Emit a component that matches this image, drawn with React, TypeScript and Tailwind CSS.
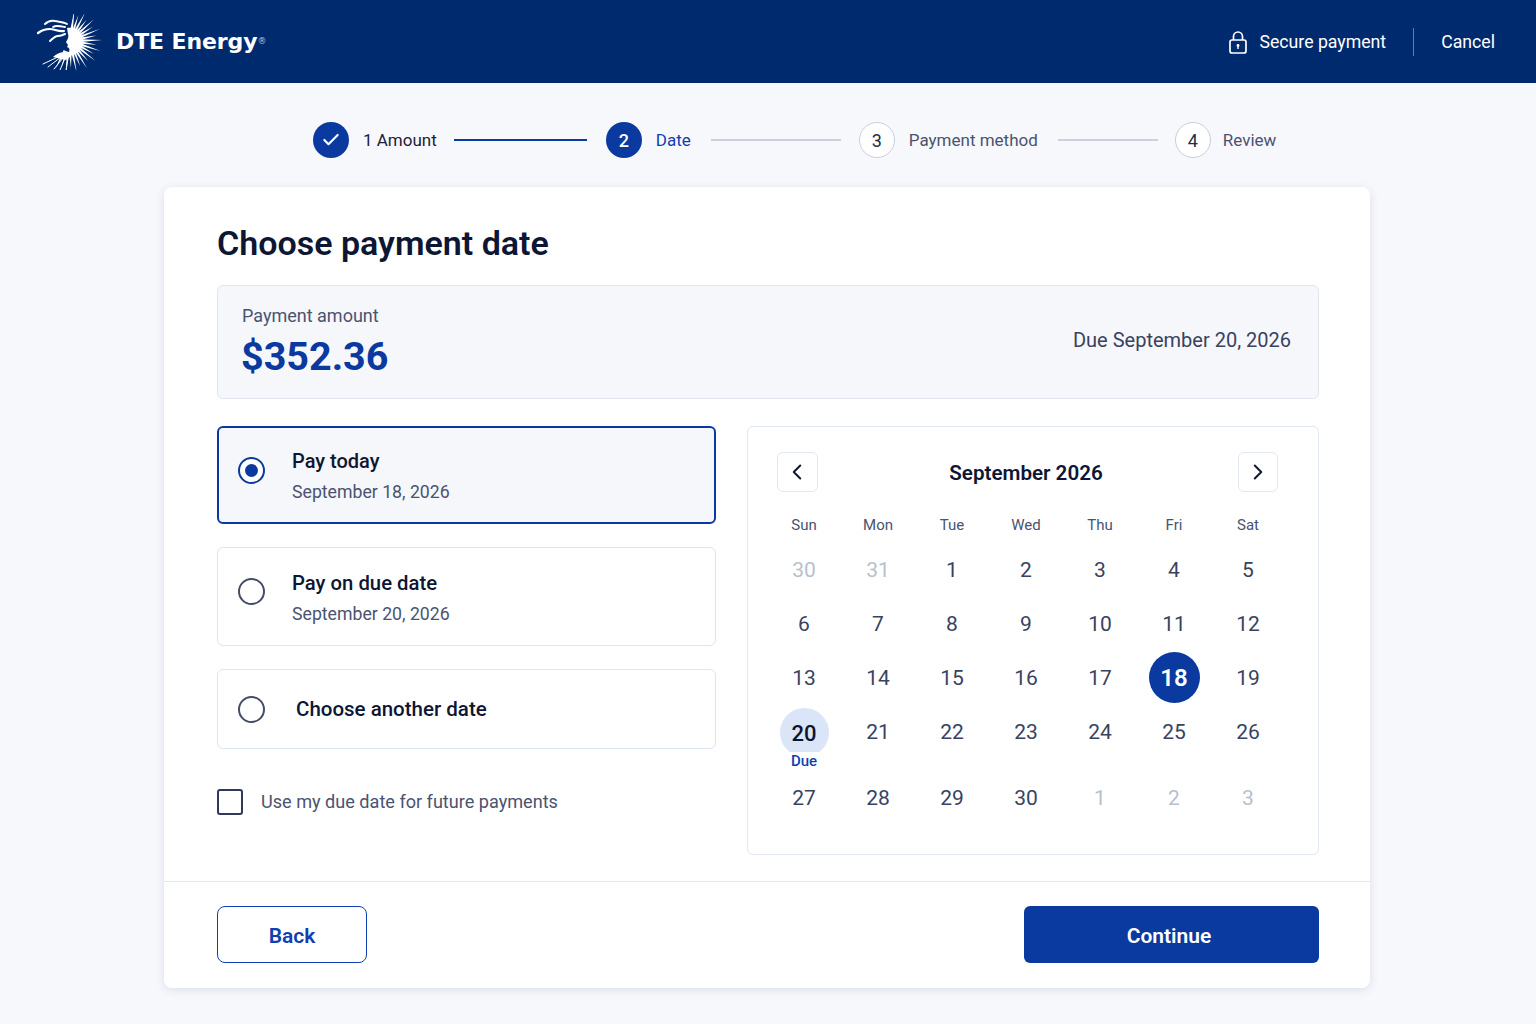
import { Check, ChevronLeft, ChevronRight } from 'lucide-react';

const font = "font-['Roboto','Liberation_Sans',sans-serif]";

const weekdays = ['Sun', 'Mon', 'Tue', 'Wed', 'Thu', 'Fri', 'Sat'];

const weeks = [
  { h: 'h-[54px]', days: [['30', 'off'], ['31', 'off'], ['1'], ['2'], ['3'], ['4'], ['5']] },
  { h: 'h-[54px]', days: [['6'], ['7'], ['8'], ['9'], ['10'], ['11'], ['12']] },
  { h: 'h-[54px]', days: [['13'], ['14'], ['15'], ['16'], ['17'], ['18', 'selected'], ['19']] },
  { h: 'h-[54px]', days: [['20', 'due'], ['21'], ['22'], ['23'], ['24'], ['25'], ['26']] },
  { h: 'h-[78px]', days: [['27'], ['28'], ['29'], ['30'], ['1', 'off'], ['2', 'off'], ['3', 'off']] },
];

function Logo() {
  const cx = 34;
  const cy = 27;
  const rays = [];
  let i = 0;
  for (let a = -82; a <= 118; a += 10) {
    const len = i % 2 === 0 ? 32 : 27;
    const r = (a * Math.PI) / 180;
    const p = r + Math.PI / 2;
    const x0 = cx + Math.cos(r) * 11;
    const y0 = cy + Math.sin(r) * 11;
    const x1 = cx + Math.cos(r) * len;
    const y1 = cy + Math.sin(r) * len;
    rays.push(
      <polygon
        key={a}
        fill="#fff"
        points={`${x0 + Math.cos(p) * 1.3},${y0 + Math.sin(p) * 1.3} ${x0 - Math.cos(p) * 1.3},${y0 - Math.sin(p) * 1.3} ${x1},${y1}`}
      />
    );
    i++;
  }
  return (
    <svg width="68" height="56" viewBox="0 0 68 56" className="shrink-0">
      {rays}
      <path
        fill="#fff"
        d="M31 14 C39 12 47 20 47 28 C47 36 40 42 32 41 C33 38 34 36 33 34 L31 33 L32 31 L30 28 C32 25 33 22 32 20 Z"
      />
      <path fill="#fff" d="M17 43 C23 37 30 37 36 41 L30 46 Z" />
      <g fill="none" stroke="#fff" strokeLinecap="round">
        <path strokeWidth="1" d="M24 42 L7 50" />
        <path strokeWidth="1" d="M25 43 L12 53" />
        <path strokeWidth="1" d="M27 44 L18 55" />
        <path strokeWidth="1" d="M29 44 L24 56" />
        <path strokeWidth="1" d="M32 44 L30 57" />
        <path strokeWidth="2" d="M9 10 C12 7 15 6 19 7 C24 8 28 8 31 10" />
        <path strokeWidth="1.8" d="M17 13 C20 11 24 12 29 13" />
        <path strokeWidth="2.2" d="M2 19 C6 16 10 15 14 15 C18 15 23 18 28 17" />
        <path strokeWidth="2" d="M14 27 C17 24 19 22 22 22 C25 22 27 21 29 20" />
      </g>
    </svg>
  );
}

function Step({ n, label, state, tight }: { n: string; label: string; state: 'done' | 'active' | 'todo'; tight?: boolean }) {
  return (
    <div className={tight ? 'flex items-center gap-[12px]' : 'flex items-center gap-[14px]'}>
      {state === 'todo' ? (
        <div className="flex h-[36px] w-[36px] items-center justify-center rounded-full border border-[#c9cedb] bg-white text-[18px] text-[#232c47]">
          {n}
        </div>
      ) : (
        <div className="flex h-[36px] w-[36px] items-center justify-center rounded-full bg-[#0a3a9f] text-[18px] font-medium text-white">
          {state === 'done' ? <Check size={20} strokeWidth={2.6} /> : n}
        </div>
      )}
      <span
        className={
          state === 'done'
            ? 'pt-[2px] text-[17px] text-[#1a2238]'
            : state === 'active'
              ? 'pt-[2px] text-[17px] text-[#0f3fb0]'
              : 'pt-[2px] text-[17px] text-[#4a5370]'
        }
      >
        {label}
      </span>
    </div>
  );
}

function Radio({ on }: { on?: boolean }) {
  return on ? (
    <div className="flex h-[27px] w-[27px] shrink-0 items-center justify-center rounded-full border-[2px] border-[#0a3a9f] bg-white">
      <div className="h-[13px] w-[13px] rounded-full bg-[#0a3a9f]" />
    </div>
  ) : (
    <div className="h-[27px] w-[27px] shrink-0 rounded-full border-[2px] border-[#434c68] bg-white" />
  );
}

function DayCell({ label, kind }: { label: string; kind?: string }) {
  if (kind === 'selected') {
    return (
      <div className="flex h-full items-center justify-center pb-[2px]">
        <div className="flex h-[51px] w-[51px] items-center justify-center rounded-full bg-[#0a3a9f] pt-[1px] text-[24px] font-semibold text-white">
          {label}
        </div>
      </div>
    );
  }
  if (kind === 'due') {
    return (
      <div className="relative flex h-full items-center justify-center">
        <div className="flex h-[49px] w-[49px] items-center justify-center rounded-full bg-[#dbe5f8] pt-[3px] text-[22px] font-medium text-[#0d1430]">
          {label}
        </div>
        <div className="absolute left-0 right-0 top-[47px] text-center text-[15px] font-medium leading-[19px] text-[#0f3fb0]">
          <span className="inline-block rounded-t-[6px] bg-white px-[6px]">Due</span>
        </div>
      </div>
    );
  }
  return (
    <div className={kind === 'off' ? 'flex h-full items-center justify-center pt-[2px] text-[21px] text-[#b8bfce]' : 'flex h-full items-center justify-center pt-[2px] text-[21px] text-[#39425f]'}>
      {label}
    </div>
  );
}

export default function App() {
  return (
    <div className={`${font} min-h-[1024px] bg-[#f7f8fc]`}>
      {/* Top bar */}
      <header className="flex h-[83px] items-center justify-between bg-[#002a6e] pl-[36px] pr-[41px]">
        <div className="flex items-center gap-[12px]">
          <Logo />
          <span className="font-['DejaVu_Sans',sans-serif] text-[22px] font-bold leading-none tracking-[-0.1px] text-white">
            DTE Energy<sup className="text-[9px] font-normal text-[#b8c4dc]">®</sup>
          </span>
        </div>
        <div className="flex items-center text-white">
          <svg width="20" height="24" viewBox="0 0 20 24" fill="none" stroke="#fff" strokeWidth="1.7" className="mr-[11px]">
            <rect x="2" y="10" width="16" height="13" rx="2" />
            <path d="M5.5 10V6.5a4.5 4.5 0 0 1 9 0V10" />
            <circle cx="10" cy="15.5" r="1.4" fill="#fff" stroke="none" />
            <path d="M10 16v3" strokeWidth="1.4" />
          </svg>
          <span className="pt-[1px] text-[17.7px]">Secure payment</span>
          <div className="mx-[27px] h-[28px] w-px bg-[#5f7cab]" />
          <span className="pt-[1px] text-[17.7px]">Cancel</span>
        </div>
      </header>

      {/* Stepper */}
      <div className="flex h-[104px] items-center pl-[313px] pt-[10px]">
        <Step n="1" label="1 Amount" state="done" />
        <div className="ml-[17px] mr-[19px] h-[2px] w-[133px] bg-[#0a3a9f]" />
        <Step n="2" label="Date" state="active" />
        <div className="ml-[20px] mr-[18px] h-[2px] w-[130px] bg-[#cdd1dc]" />
        <Step n="3" label="Payment method" state="todo" />
        <div className="ml-[20px] mr-[17px] h-[2px] w-[100px] bg-[#cdd1dc]" />
        <Step n="4" label="Review" state="todo" tight />
      </div>

      {/* Card */}
      <main className="mx-[164px] h-[801px] w-[1206px] rounded-[8px] bg-white shadow-[0_2px_10px_rgba(30,50,100,0.12)]">
        <div className="pl-[53px] pr-[51px] pt-[34px]">
          <h1 className="text-[34px] font-semibold leading-[44px] text-[#0d1633]">Choose payment date</h1>

          <div className="mt-[20px] flex h-[114px] items-center justify-between rounded-[6px] border border-[#dfe4ef] bg-[#f5f7fb] pl-[24px] pr-[27px]">
            <div className="pt-[2px]">
              <div className="text-[18px] leading-[26px] text-[#4a5370]">Payment amount</div>
              <div className="-ml-[1px] mt-[2px] text-[39.5px] font-bold leading-[52px] text-[#0a3a9f]">$352.36</div>
            </div>
            <div className="pb-[4px] text-[20px] text-[#39425f]">Due September 20, 2026</div>
          </div>

          <div className="mt-[27px] flex gap-[31px]">
            {/* Date options */}
            <div className="w-[499px] shrink-0">
              <label className="flex h-[98px] items-center gap-[27px] rounded-[6px] border-[2px] border-[#0a3a9f] bg-[#f5f7fb] pl-[19px] pb-[9px]">
                <Radio on />
                <div className="pt-[9px]">
                  <div className="text-[20px] font-medium leading-[30px] text-[#0d1633]">Pay today</div>
                  <div className="mt-[3px] text-[17.7px] leading-[26px] text-[#4a5370]">September 18, 2026</div>
                </div>
              </label>
              <label className="mt-[23px] flex h-[99px] items-center gap-[27px] rounded-[6px] border border-[#dfe4f0] bg-white pl-[20px] pb-[11px]">
                <Radio />
                <div className="pt-[13px]">
                  <div className="text-[20.3px] font-medium leading-[30px] text-[#0d1633]">Pay on due date</div>
                  <div className="mt-[3px] text-[17.7px] leading-[26px] text-[#4a5370]">September 20, 2026</div>
                </div>
              </label>
              <label className="mt-[23px] flex h-[80px] items-center gap-[31px] rounded-[6px] border border-[#dfe4f0] bg-white pl-[20px]">
                <Radio />
                <div className="text-[20.5px] font-medium text-[#0d1633]">Choose another date</div>
              </label>
              <label className="mt-[39px] flex items-center gap-[18px]">
                <div className="h-[26px] w-[26px] rounded-[3px] border-[2px] border-[#2f3a5a] bg-white" />
                <span className="text-[18.1px] text-[#4a5370]">Use my due date for future payments</span>
              </label>
            </div>

            {/* Calendar */}
            <div className="h-[429px] flex-1 rounded-[6px] border border-[#e3e7f1] pl-[19px] pr-[18px] pt-[25px]">
              <div className="flex items-center justify-between pl-[10px] pr-[22px]">
                <button className="flex h-[40px] w-[41px] items-center justify-center rounded-[6px] border border-[#e3e7f1] bg-white pr-[1px] text-[#0d1633]">
                  <ChevronLeft size={26} strokeWidth={1.8} />
                </button>
                <span className="mr-[4px] pt-[2px] text-[20.6px] font-semibold text-[#0d1633]">September 2026</span>
                <button className="flex h-[40px] w-[40px] items-center justify-center rounded-[6px] border border-[#e3e7f1] bg-white text-[#0d1633]">
                  <ChevronRight size={26} strokeWidth={1.8} />
                </button>
              </div>
              <div className="mt-[20px] grid w-[518px] grid-cols-7">
                {weekdays.map((d) => (
                  <div key={d} className="text-center text-[15px] leading-[26px] text-[#4a5370]">{d}</div>
                ))}
              </div>
              <div className="mt-[5px] w-[518px]">
                {weeks.map((w, i) => (
                  <div key={i} className={`grid grid-cols-7 ${w.h}`}>
                    {w.days.map((d, j) => (
                      <DayCell key={j} label={d[0]} kind={d[1]} />
                    ))}
                  </div>
                ))}
              </div>
            </div>
          </div>
        </div>

        {/* Footer */}
        <div className="mt-[26px] flex items-center justify-between border-t border-[#e3e7f1] pl-[53px] pr-[51px] pt-[24px]">
          <button className="h-[57px] w-[150px] rounded-[8px] border border-[#0f3fb0] bg-white pt-[4px] text-[21px] font-semibold text-[#0f3fb0]">
            Back
          </button>
          <button className="h-[57px] w-[295px] rounded-[6px] bg-[#0a3a9f] pr-[5px] pt-[4px] text-[21px] font-semibold text-white">
            Continue
          </button>
        </div>
      </main>
    </div>
  );
}
